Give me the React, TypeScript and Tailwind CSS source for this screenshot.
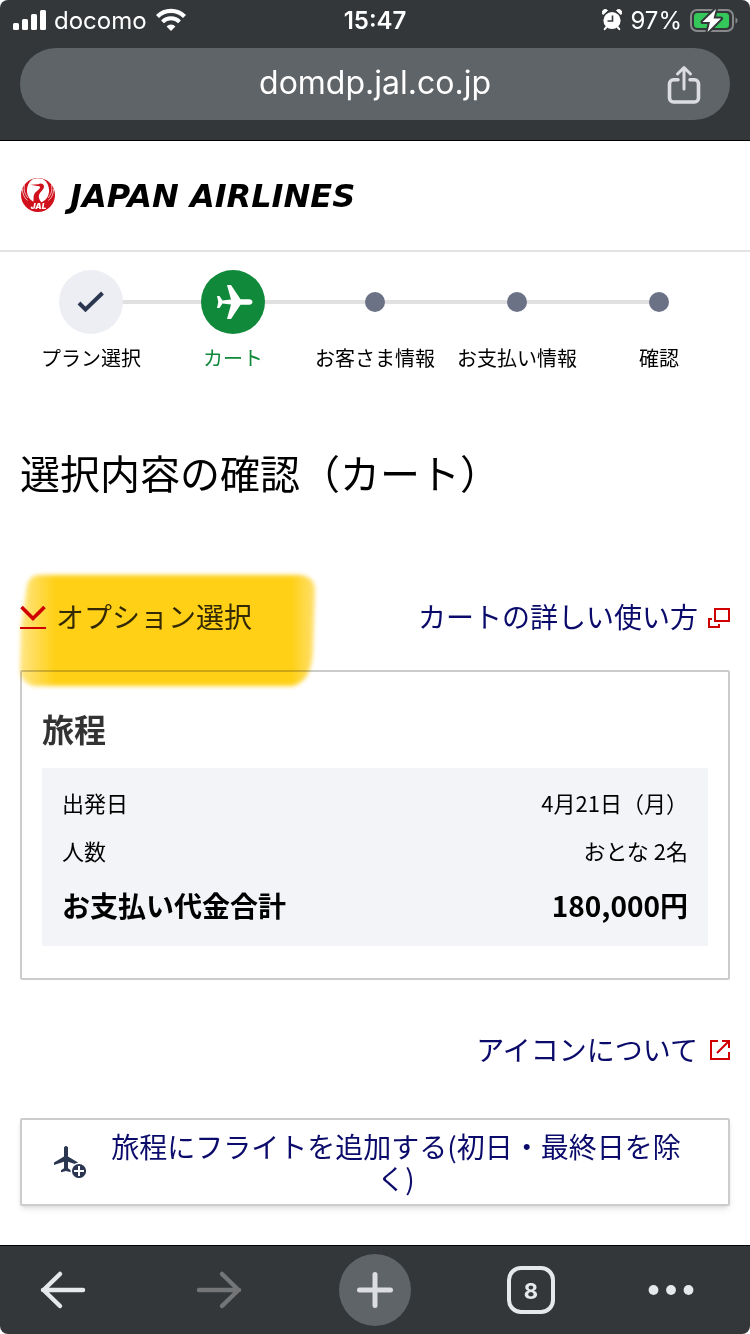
import React from 'react';

type Step = {
  label: string;
  status: 'done' | 'current' | 'todo';
};

type SummaryRow = {
  label: string;
  value: string;
};

const steps: Step[] = [
  { label: 'プラン選択', status: 'done' },
  { label: 'カート', status: 'current' },
  { label: 'お客さま情報', status: 'todo' },
  { label: 'お支払い情報', status: 'todo' },
  { label: '確認', status: 'todo' },
];

const rows: SummaryRow[] = [
  { label: '出発日', value: '4月21日（月）' },
  { label: '人数', value: 'おとな 2名' },
];

const StatusBar = () => (
  <div className="grid grid-cols-[1fr_auto_1fr] items-center h-10 px-3 text-2xl text-white">
    <div className="flex items-center gap-2">
      <svg width="34" height="22" viewBox="0 0 34 22" fill="#fff" aria-hidden="true">
        <rect x="1" y="14" width="6" height="7" rx="1.5" />
        <rect x="10" y="10" width="6" height="11" rx="1.5" />
        <rect x="19" y="5" width="6" height="16" rx="1.5" />
        <rect x="28" y="1" width="6" height="20" rx="1.5" />
      </svg>
      <span className="pt-0.5">docomo</span>
      <svg width="32" height="24" viewBox="0 0 32 24" aria-hidden="true">
        <path d="M2.5 8.5a19 19 0 0 1 27 0" fill="none" stroke="#fff" strokeWidth="4.2" />
        <path d="M7.5 13.9a12 12 0 0 1 17 0" fill="none" stroke="#fff" strokeWidth="4" />
        <path d="M16 23l-4.4-4.6a6.3 6.3 0 0 1 8.8 0z" fill="#fff" />
      </svg>
    </div>
    <span className="pt-0.5 font-semibold">15:47</span>
    <div className="flex items-center justify-end gap-2">
      <svg width="20" height="22" viewBox="0 0 20 22" aria-hidden="true">
        <circle cx="10" cy="11.5" r="8.6" fill="#fff" />
        <path d="M1 5.5a3 3 0 0 1 4.500-4zM19 5.500a3 3 0 0 0-4.500-4z" fill="#fff" stroke="#fff" strokeLinejoin="round" />
        <path d="M4.500 18l-1.800 2.200M15.500 18l1.800 2.200" stroke="#fff" strokeWidth="2" strokeLinecap="round" />
        <path d="M10.500 6.500v5.500H5.500" fill="none" stroke="#33373a" strokeWidth="1.600" />
      </svg>
      <span className="pt-0.5">97%</span>
      <svg width="48" height="24" viewBox="0 0 48 24" aria-hidden="true">
        <rect x="1" y="2" width="42" height="21" rx="6" fill="none" stroke="#88898b" strokeWidth="2" />
        <path d="M45.500 9.500v6c1.300-.5 2-1.600 2-3s-.7-2.500-2-3z" fill="#88898b" />
        <rect x="4" y="5" width="35" height="15" rx="3.500" fill="#34c759" />
        <path d="M26 1L12.500 14h7.500l-2.500 10L31 10.500h-7.500z" fill="#fff" stroke="#33373a" strokeWidth="4" strokeLinejoin="round" />
        <path d="M26 1L12.500 14h7.500l-2.500 10L31 10.500h-7.500z" fill="#fff" />
      </svg>
    </div>
  </div>
);

const BrowserHeader = () => (
  <header className="bg-[#33373a] border-b border-black rounded-t-lg font-['Inter',sans-serif]">
    <StatusBar />
    <div className="px-5 pt-2 pb-5">
      <div className="relative flex items-center justify-center h-18 rounded-full bg-[#5f6468] text-white text-[32px]">
        <span className="pb-0.5">domdp.jal.co.jp</span>
        <button className="absolute right-7 top-4" aria-label="共有">
          <svg width="36" height="40" viewBox="0 0 36 40" fill="none" stroke="#dcdde2" strokeWidth="3.600" strokeLinecap="round" strokeLinejoin="round">
            <path d="M12 15.800H7.500a4 4 0 0 0-4 4V34a4 4 0 0 0 4 4h21a4 4 0 0 0 4-4V19.800a4 4 0 0 0-4-4H24" />
            <path d="M18 25V4M11.500 10L18 3.500l6.500 6.500" strokeWidth="3" />
          </svg>
        </button>
      </div>
    </div>
  </header>
);

const CraneMark = () => (
  <svg width="36" height="36" viewBox="-1 0 36 36" aria-hidden="true">
    <circle cx="17" cy="17" r="17" fill="#d0101b" />
    {/* wings */}
    <path d="M12 1C7.500 4 5.500 9 6 14c.6 5 3.500 8.800 8 10.500h6c4.500-1.700 7.400-5.500 8-10.500.5-5-1.500-10-6-13a17 17 0 0 0-10 0z" fill="#fff" />
    <path d="M3.500 7c-1 4.500 0 9 3.500 13M1.500 11c-.2 4.500 1.500 8.500 5 11.500M30.500 7c1 4.500 0 9-3.500 13M32.500 11c.2 4.500-1.500 8.500-5 11.500" fill="none" stroke="#fff" strokeWidth=".7" />
    {/* head and neck */}
    <path d="M9.500 6.800l8-.6c2-1.500 5.500-.6 5.500 2.200 0 3.200-4 5.200-5 8.600-.7 2.800.5 5.500 3 8h-9c1.300-3.500-.3-6.500 1.800-9.700 2-2.900 5.200-4 5.400-6.300-.5-.9-1.800-1-3-1z" fill="#d0101b" />
    <text x="17.500" y="30.500" fontSize="8" fontWeight="900" fontStyle="italic" textAnchor="middle" fill="#fff" fontFamily="Inter, sans-serif">JAL</text>
  </svg>
);

const SiteHeader = () => (
  <div className="flex items-center h-[111px] px-5 border-b-2 border-[#e3e3e3]">
    <a href="#" className="flex items-center gap-3.5 text-black">
      <CraneMark />
      <span className="text-[32px] leading-9 font-bold italic font-['DejaVu_Sans',sans-serif]">JAPAN AIRLINES</span>
    </a>
  </div>
);

const StepIcon = ({ status }: { status: Step['status'] }) => {
  if (status === 'done')
    return (
      <span className="flex items-center justify-center size-16 rounded-full bg-[#edeef3]">
        <svg width="28" height="24" viewBox="0 0 28 24" fill="none" stroke="#2b3650" strokeWidth="4">
          <path d="M2 13l6.500 6.500L25.500 3" />
        </svg>
      </span>
    );
  if (status === 'current')
    return (
      <span className="flex items-center justify-center size-16 rounded-full bg-[#108a3a]">
        <svg width="38" height="36" viewBox="0 0 38 36" fill="#fff" className="ml-0.5">
          <path d="M12 1h4l9.500 14.300h8.500c2 0 3.500 1.200 3.500 2.700s-1.500 2.700-3.500 2.700h-8.500L16 35h-4l4-14.600-8.500-.8L4.500 24H2l1.300-6L2 12h2.500l3 4.400 8.500-.8z" />
        </svg>
      </span>
    );
  return <span className="size-5 rounded-full bg-[#6b7285]" />;
};

const Stepper = () => (
  <ol className="grid grid-cols-5 mt-[18px]">
    {steps.map((step, i) => (
      <li key={step.label} className="flex flex-col items-center">
        <div className="relative flex items-center justify-center w-full h-16">
          {i > 0 && <span className="absolute right-1/2 w-full h-1 bg-[#e0e0e0]" />}
          {/* keeps the marker above the next connector */}
          <span className="z-10 flex"><StepIcon status={step.status} /></span>
        </div>
        <span className={`mt-3 text-xl leading-6 whitespace-nowrap ${step.status === 'current' ? 'text-[#108a3a]' : 'text-black'}`}>
          {step.label}
        </span>
      </li>
    ))}
  </ol>
);

const Highlight = () => (
  <svg className="absolute -left-1 -top-8 mix-blend-multiply pointer-events-none" width="306" height="126" viewBox="0 0 306 126" aria-hidden="true">
    <defs>
      <filter id="soft" x="-5%" y="-10%" width="110%" height="120%">
        <feGaussianBlur stdDeviation="2" />
      </filter>
      <linearGradient id="ink" x1="0" x2="1">
        <stop offset="0" stopColor="#ffe686" />
        <stop offset=".12" stopColor="#ffd014" />
        <stop offset=".92" stopColor="#ffd014" />
        <stop offset="1" stopColor="#ffe070" />
      </linearGradient>
    </defs>
    <path d="M22 9H284q15 2 15 15l-2 60q-1 31-20 36H18q-13-3-14-16l1-42L11 20q2-10 11-11z" fill="url(#ink)" filter="url(#soft)" />
  </svg>
);

const Itinerary = () => (
  <section className="border-2 border-[#ccc] rounded-xs px-5 pt-8 pb-8">
    <h2 className="text-[32px] leading-12 font-bold text-[#333]">旅程</h2>
    <dl className="mt-4 px-5 py-2.5 bg-[#f3f4f7] text-black">
      {rows.map((row) => (
        <div key={row.label} className="flex justify-between text-[22px] leading-12">
          <dt>{row.label}</dt>
          <dd>{row.value}</dd>
        </div>
      ))}
      <div className="flex justify-between py-2.5 text-[28px] leading-[42px] font-bold">
        <dt>お支払い代金合計</dt>
        <dd>180,000円</dd>
      </div>
    </dl>
  </section>
);

const Toolbar = () => (
  <nav className="grid grid-cols-[126px_1fr_126px_1fr_126px] items-center h-[89px] bg-[#33373a] border-t border-black rounded-b-lg font-['Inter',sans-serif]">
    <button className="justify-self-center" aria-label="戻る">
      <svg width="46" height="40" viewBox="0 0 46 40" fill="none" stroke="#e5e9ec" strokeWidth="4.500" strokeLinecap="round" strokeLinejoin="round">
        <path d="M43 20H3M20 4L3.500 20 20 36" />
      </svg>
    </button>
    <button className="justify-self-center" aria-label="進む" disabled>
      <svg width="46" height="40" viewBox="0 0 46 40" fill="none" stroke="#747577" strokeWidth="4.500" strokeLinecap="round" strokeLinejoin="round">
        <path d="M3 20h40M26 4l16.500 16L26 36" />
      </svg>
    </button>
    <button className="flex items-center justify-center justify-self-center size-18 rounded-full bg-[#5f6468]" aria-label="新しいタブ">
      <svg width="38" height="38" viewBox="0 0 38 38" stroke="#dcdde2" strokeWidth="5" strokeLinecap="round">
        <path d="M19 3.500v31M3.500 19h31" />
      </svg>
    </button>
    <button className="flex items-center justify-center justify-self-center size-12 pt-0.5 border-4 border-[#e5e9ec] rounded-[14px] text-[#e5e9ec] text-[22px] font-bold">8</button>
    <button className="justify-self-center mr-8" aria-label="メニュー">
      <svg width="46" height="12" viewBox="0 0 46 12" fill="#e5e9ec">
        <circle cx="5.500" cy="6" r="4.900" />
        <circle cx="23" cy="6" r="4.900" />
        <circle cx="40.500" cy="6" r="4.900" />
      </svg>
    </button>
  </nav>
);

const App = () => {
  return (
    <div lang="ja" className="flex flex-col min-h-screen bg-white font-['Noto_Sans_CJK_JP',sans-serif]">
      <BrowserHeader />
      <SiteHeader />
      <main className="flex-1 px-5 pb-9">
        <Stepper />

        <h1 className="mt-[72px] text-[40px] leading-[60px] text-black">選択内容の確認（カート）</h1>

        <div className="relative flex items-center justify-between mt-24 text-[28px] leading-9">
          <a href="#options" className="flex items-center gap-2.5 text-[#333]">
            <svg width="26" height="26" viewBox="0 0 26 26" fill="none" stroke="#d00000" className="mt-1" aria-hidden="true">
              <path d="M1.500 2L13 13.500 24.500 2" strokeWidth="3.600" />
              <path d="M0 23h26" strokeWidth="2" />
            </svg>
            オプション選択
          </a>
          <a href="#guide" className="flex items-center gap-2.5 text-[#0b0b6b]">
            カートの詳しい使い方
            <svg width="22" height="20" viewBox="0 0 22 20" fill="none" stroke="#d00000" strokeWidth="2" className="mt-1" aria-hidden="true">
              <path d="M7 1h14v12H7z" />
              <path d="M4 11H1v8h10v-3" />
            </svg>
          </a>
          <Highlight />
        </div>

        <div className="mt-9" id="options">
          <Itinerary />
        </div>

        <div className="flex justify-end mt-[51px] text-[28px] leading-9">
          <a href="#icons" className="flex items-center gap-3 text-[#0b0b6b]">
            アイコンについて
            <svg width="20" height="20" viewBox="0 0 20 20" fill="none" stroke="#d00000" strokeWidth="2" className="mt-0.5" aria-hidden="true">
              <path d="M8 1H1v18h18v-7" />
              <path d="M12 1h7v7M19 1L7 13" />
            </svg>
          </a>
        </div>

        <button className="flex items-center gap-3.5 w-full mt-[51px] py-2.5 pl-8 pr-9 border-2 border-[#ccc] rounded-xs bg-white shadow-md text-[#0b0b6b] text-[28px] leading-8">
          <svg width="32" height="32" viewBox="0 0 32 32" className="shrink-0" aria-hidden="true">
            <path d="M12 0c1.300 0 2 1 2 2.200v8.300l10 6v2.500l-10-3.200v6.500l3 2v2L12 25l-5 1.300v-2l3-2v-6.500L0 19v-2.500l10-6V2.200C10 1 10.700 0 12 0z" fill="#2b3650" />
            <circle cx="25" cy="25" r="7.800" fill="#2b3650" stroke="#fff" strokeWidth="1.500" />
            <path d="M25 20v10M20 25h10" stroke="#fff" strokeWidth="2" />
          </svg>
          <span className="flex-1">旅程にフライトを追加する(初日・最終日を除く)</span>
        </button>
      </main>
      <Toolbar />
    </div>
  );
};

export default App;
